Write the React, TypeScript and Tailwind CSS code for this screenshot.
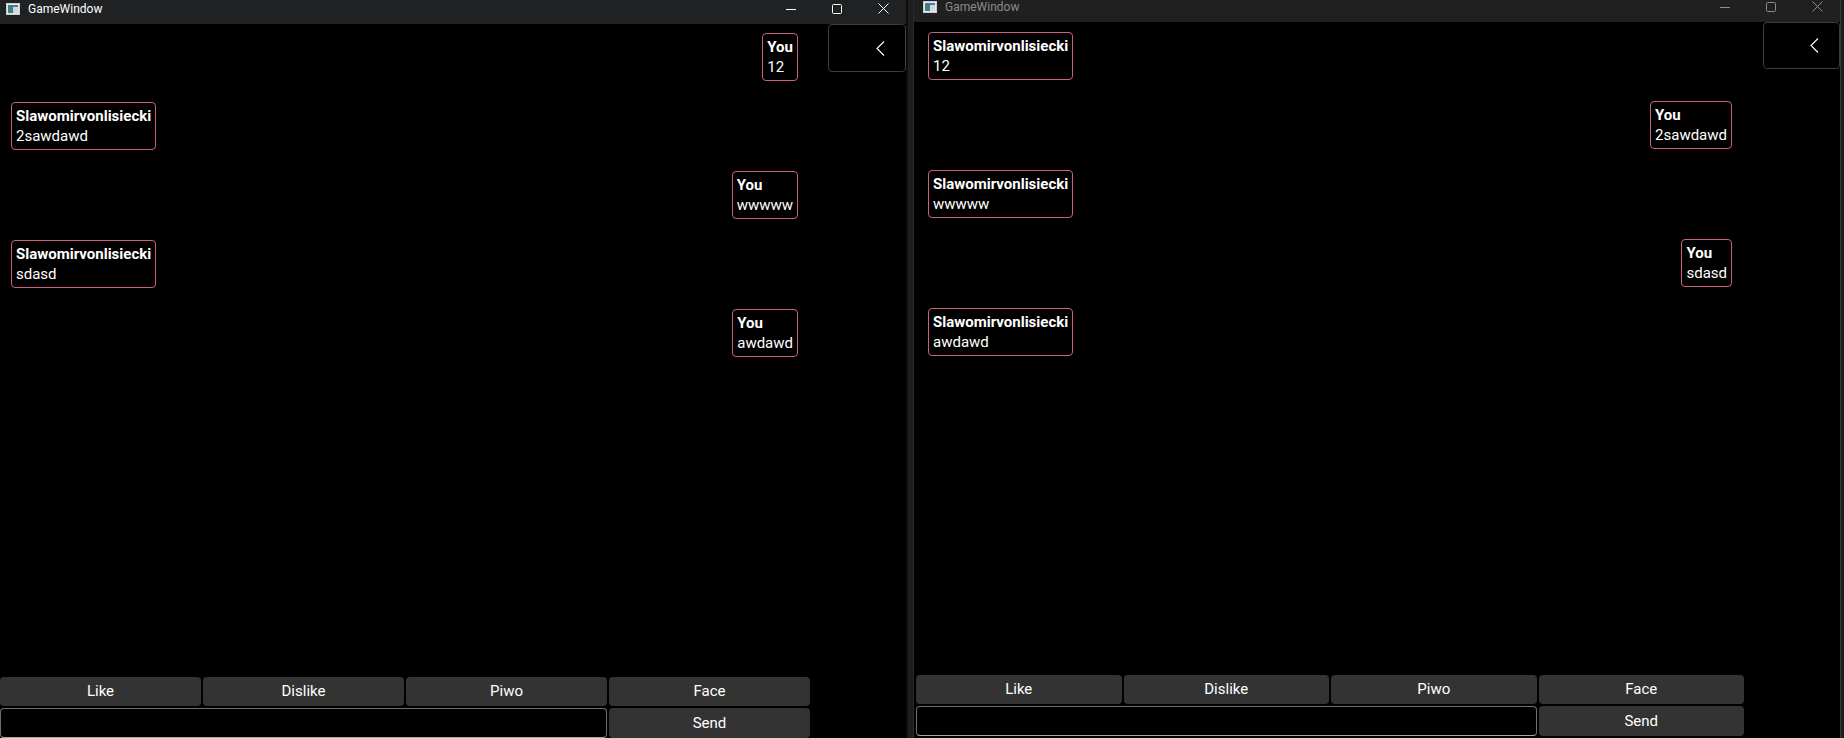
import React from "react";

type Msg = { from: string; text: string; mine: boolean };

const leftMessages: Msg[] = [
  { from: "You", text: "12", mine: true },
  { from: "Slawomirvonlisiecki", text: "2sawdawd", mine: false },
  { from: "You", text: "wwwww", mine: true },
  { from: "Slawomirvonlisiecki", text: "sdasd", mine: false },
  { from: "You", text: "awdawd", mine: true },
];

const rightMessages: Msg[] = [
  { from: "Slawomirvonlisiecki", text: "12", mine: false },
  { from: "You", text: "2sawdawd", mine: true },
  { from: "Slawomirvonlisiecki", text: "wwwww", mine: false },
  { from: "You", text: "sdasd", mine: true },
  { from: "Slawomirvonlisiecki", text: "awdawd", mine: false },
];

function AppIcon() {
  return (
    <svg width="14" height="12" viewBox="0 0 14 12">
      <rect x="0.5" y="0.5" width="13" height="11" fill="#e6eaed" stroke="#c7cdd2" />
      <rect x="2" y="2" width="5" height="8" fill="#3f7f86" />
      <rect x="7" y="2" width="5" height="8" fill="#cfd8de" />
      <rect x="7" y="2" width="5" height="2" fill="#4a79b0" />
    </svg>
  );
}

function Controls({ color }: { color: string }) {
  return (
    <div className="ml-auto flex h-full">
      <div className="w-[46px] flex items-center justify-center">
        <svg width="10" height="10" viewBox="0 0 10 10">
          <line x1="0" y1="5.5" x2="10" y2="5.5" stroke={color} strokeWidth="1" />
        </svg>
      </div>
      <div className="w-[46px] flex items-center justify-center">
        <svg width="10" height="10" viewBox="0 0 10 10">
          <rect x="0.5" y="0.5" width="9" height="9" rx="1" fill="none" stroke={color} strokeWidth="1" />
        </svg>
      </div>
      <div className="w-[46px] flex items-center justify-center">
        <svg width="11" height="11" viewBox="0 0 11 11">
          <path d="M0.5 0.5 L10.5 10.5 M10.5 0.5 L0.5 10.5" stroke={color} strokeWidth="1" />
        </svg>
      </div>
    </div>
  );
}

function Bubble({ m }: { m: Msg }) {
  return (
    <div
      className={`border border-[#c9617f] rounded-[4px] px-[4px] py-[3px] leading-[20px] text-[15px] text-white ${
        m.mine ? "self-end" : "self-start"
      }`}
    >
      <div className="font-bold">{m.from}</div>
      <div>{m.text}</div>
    </div>
  );
}

function Chevron() {
  return (
    <svg width="9" height="15" viewBox="0 0 9 15">
      <polyline points="8,0.5 1,7.5 8,14.5" fill="none" stroke="#ffffff" strokeWidth="1.1" />
    </svg>
  );
}

function BottomBar({ wide }: { wide: boolean }) {
  const btn = "bg-[#333333] rounded-[4px] flex items-center justify-center text-white text-[15px]";
  return (
    <div
      className={`grid grid-cols-4 gap-[2px] grid-rows-[29px_30px] ${
        wide ? "w-[828px] ml-[2px] mb-[2px]" : "w-[810px]"
      }`}
    >
      <div className={btn}>Like</div>
      <div className={btn}>Dislike</div>
      <div className={btn}>Piwo</div>
      <div className={btn}>Face</div>
      <div className="col-span-3 bg-black border border-[#6f6f6f] border-b-[#a8a8a8] rounded-[4px]" />
      <div className={btn}>Send</div>
    </div>
  );
}

function GameWindow({
  active,
  messages,
}: {
  active: boolean;
  messages: Msg[];
}) {
  return (
    <div className={`flex flex-col h-full ${active ? "w-[906px]" : "w-[926px]"}`}>
      {/* Title bar */}
      <div
        className={`flex items-start shrink-0 ${
          active ? "h-[24px] bg-[#1f2123]" : "h-[22px] bg-[#202020]"
        }`}
      >
        <div className={`flex items-center w-full ${active ? "h-[17px]" : "h-[13px]"}`}>
          <div className={active ? "ml-[6px]" : "ml-[9px]"}>
            <AppIcon />
          </div>
          <span
            className={`ml-[8px] text-[12px] ${active ? "text-white" : "text-[#8c8c8c]"}`}
          >
            GameWindow
          </span>
          <Controls color={active ? "#ffffff" : "#8c8c8c"} />
        </div>
      </div>

      {/* Content */}
      <div className="flex-1 flex flex-col bg-black">
        <div className="flex-1 flex">
          <div
            className={`flex-1 flex flex-col gap-[21px] ${
              active ? "pt-[9px] pl-[11px] pr-[30px]" : "pt-[10px] pl-[14px] pr-[31px]"
            }`}
          >
            {messages.map((m, i) => (
              <Bubble key={i} m={m} />
            ))}
          </div>
          <div className={active ? "w-[78px]" : "w-[77px]"}>
            <div
              className={`border border-[#3c3c3c] rounded-[4px] flex items-center justify-end pr-[20px] ${
                active ? "h-[48px]" : "h-[47px]"
              }`}
            >
              <Chevron />
            </div>
          </div>
        </div>
        <BottomBar wide={!active} />
      </div>
    </div>
  );
}

export default function App() {
  return (
    <div
      className="w-[1844px] h-[738px] flex bg-black overflow-hidden"
      style={{ fontFamily: "Roboto, 'Liberation Sans', sans-serif" }}
    >
      <GameWindow active messages={leftMessages} />

      {/* gap between windows */}
      <div className="w-[8px] h-full flex">
        <div className="w-[2px] bg-[#0d0d0d]" />
        <div className="w-[6px] bg-[#1c1d1f] border-r border-[#26282a]" />
      </div>

      <GameWindow active={false} messages={rightMessages} />

      <div className="w-[4px] h-full bg-[#1e1e1e] border-l border-[#3a3a3a]" />
    </div>
  );
}
